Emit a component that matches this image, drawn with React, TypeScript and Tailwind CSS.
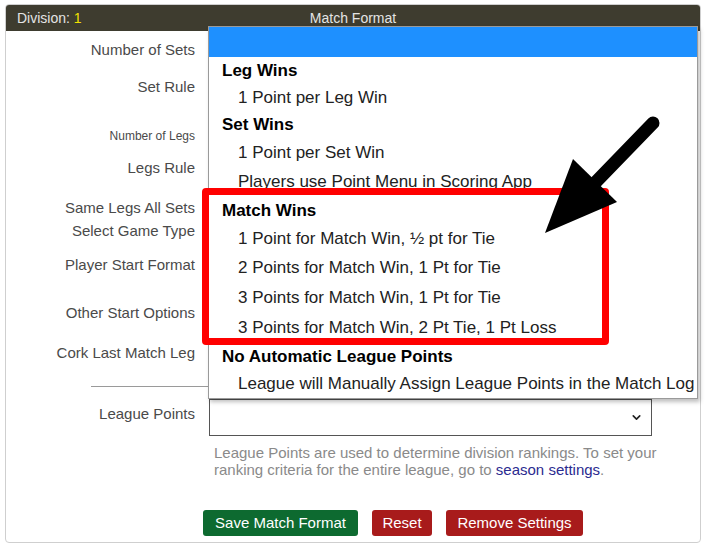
import { ChevronDown } from 'lucide-react'

const labels: { text: string; mt: number; small?: boolean }[] = [
  { text: 'Number of Sets', mt: 9 },
  { text: 'Set Rule', mt: 17 },
  { text: 'Number of Legs', mt: 29, small: true },
  { text: 'Legs Rule', mt: 12 },
  { text: 'Same Legs All Sets', mt: 20 },
  { text: 'Select Game Type', mt: 3 },
  { text: 'Player Start Format', mt: 14 },
  { text: 'Other Start Options', mt: 28 },
  { text: 'Cork Last Match Leg', mt: 20 },
]

const menu: { text: string; h: number; group?: boolean }[] = [
  { text: 'Leg Wins', h: 27, group: true },
  { text: '1 Point per Leg Win', h: 27 },
  { text: 'Set Wins', h: 28, group: true },
  { text: '1 Point per Set Win', h: 27 },
  { text: 'Players use Point Menu in Scoring App', h: 31 },
  { text: 'Match Wins', h: 28, group: true },
  { text: '1 Point for Match Win, ½ pt for Tie', h: 27 },
  { text: '2 Points for Match Win, 1 Pt for Tie', h: 31 },
  { text: '3 Points for Match Win, 1 Pt for Tie', h: 30 },
  { text: '3 Points for Match Win, 2 Pt Tie, 1 Pt Loss', h: 30 },
  { text: 'No Automatic League Points', h: 28, group: true },
  { text: 'League will Manually Assign League Points in the Match Log', h: 25 },
]

export default function App() {
  return (
    <div className="relative w-[705px] h-[549px] bg-white overflow-hidden font-['Liberation_Sans',Arial,sans-serif]">
      <div className="absolute inset-0 pt-[4px] pl-[5px]">
        {/* card */}
        <div className="w-[696px] h-[539px] border border-[#cfcfcf] rounded-[4px] flex flex-col">
          <div className="h-[26px] bg-[#3e3c2f] rounded-t-[3px] grid grid-cols-3 items-center text-[14px] text-[#e4e4e4]">
            <div className="pl-[11px]">
              Division: <span className="text-[#f2e200]">1</span>
            </div>
            <div className="text-center">Match Format</div>
            <div />
          </div>

          <div className="flex flex-col text-[15px] text-[#4a4a4a]">
            {labels.map(l => (
              <div
                key={l.text}
                style={{ marginTop: l.mt }}
                className={`w-[189px] text-right leading-[20px] ${l.small ? 'text-[12px]' : ''}`}
              >
                {l.text}
              </div>
            ))}
            <div className="mt-[23px] ml-[85px] w-[118px] h-px bg-[#9a9a9a]" />

            <div className="mt-[12px] flex items-start">
              <div className="w-[189px] text-right leading-[20px] pt-[5px]">League Points</div>
              <div className="ml-[14px] w-[443px] h-[37px] border border-[#555] flex items-center justify-end pr-[8px]">
                <ChevronDown size={13} strokeWidth={3} className="text-[#222]" />
              </div>
            </div>

            <div className="mt-[8px] ml-[208px] w-[460px] text-[15px] leading-[17px] text-[#8a8a8a]">
              League Points are used to determine division rankings. To set your ranking criteria for the entire
              league, go to <span className="text-[#2b2b8f]">season settings</span>.
            </div>

            <div className="mt-[32px] ml-[197px] flex gap-[14px] text-[15px] text-white">
              <button className="w-[155px] h-[26px] rounded-[3px] bg-[#0d6a30]">Save Match Format</button>
              <button className="w-[60px] h-[26px] rounded-[3px] bg-[#a81b1b]">Reset</button>
              <button className="w-[137px] h-[26px] rounded-[3px] bg-[#a81b1b]">Remove Settings</button>
            </div>
          </div>
        </div>
      </div>

      {/* open select menu */}
      <div className="absolute left-[208px] top-[26px] w-[490px] h-[373px] bg-white border border-[#9a9a9a] shadow-[2px_3px_4px_rgba(0,0,0,0.25)] text-[17px] text-[#222]">
        <div className="h-[30px] bg-[#1e90ff]" />
        {menu.map(m => (
          <div
            key={m.text}
            style={{ height: m.h }}
            className={`flex items-center whitespace-nowrap ${m.group ? 'pl-[13px] font-bold text-black' : 'pl-[29px]'}`}
          >
            {m.text}
          </div>
        ))}
      </div>

      {/* annotation box */}
      <div className="absolute left-[202px] top-[188px] w-[407px] h-[157px] border-[7px] border-[#ff0000] rounded-[4px]" />

      {/* annotation arrow */}
      <svg className="absolute left-0 top-0" width="705" height="549" viewBox="0 0 705 549">
        <line x1="653" y1="123" x2="592" y2="186" stroke="#000" strokeWidth="13" strokeLinecap="round" />
        <polygon points="573,159 617,202 545,233" fill="#000" />
      </svg>
    </div>
  )
}
